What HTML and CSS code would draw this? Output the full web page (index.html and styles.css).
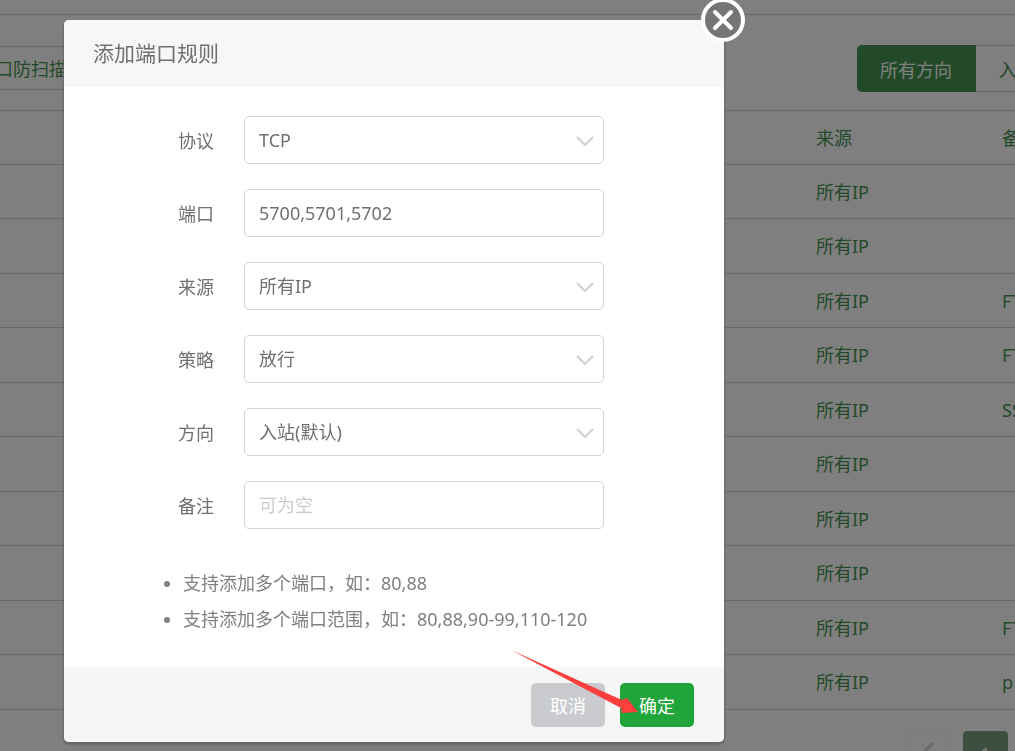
FILE: index.html
```html
<!DOCTYPE html>
<html lang="zh-CN">
<head>
    <meta charset="UTF-8">
    <meta name="viewport" content="width=device-width, initial-scale=1.0">
    <title>添加端口规则</title>
    <link rel="stylesheet" href="styles.css">
</head>
<body>
    <div class="page">
        <div class="topbar"></div>
        <div class="toolbar">
            <button type="button" class="btn-scan">口防扫描</button>
            <div class="btn-group">
                <button type="button" class="on">所有方向</button>
                <button type="button" class="in">入站</button>
            </div>
        </div>
        <table class="rules">
            <thead>
                <tr><th class="col-rest"></th><th class="col-source">来源</th><th class="col-ps">备注</th></tr>
            </thead>
            <tbody>
                <tr><td></td><td>所有IP</td><td></td></tr>
                <tr><td></td><td>所有IP</td><td></td></tr>
                <tr><td></td><td>所有IP</td><td>FTP</td></tr>
                <tr><td></td><td>所有IP</td><td>FTP</td></tr>
                <tr><td></td><td>所有IP</td><td>SSH</td></tr>
                <tr><td></td><td>所有IP</td><td></td></tr>
                <tr><td></td><td>所有IP</td><td></td></tr>
                <tr><td></td><td>所有IP</td><td></td></tr>
                <tr><td></td><td>所有IP</td><td>FTP</td></tr>
                <tr><td></td><td>所有IP</td><td>p</td></tr>
            </tbody>
        </table>
        <div class="pager">
            <button type="button" class="prev" aria-label="上一页"><svg width="12" height="20" viewBox="0 0 12 20"><path d="M10 2L2 10l8 8" fill="none" stroke="currentColor" stroke-width="3"/></svg></button>
            <button type="button" class="on">1</button>
        </div>
    </div>

    <div class="mask">
        <form class="layer">
            <div class="layer-title">添加端口规则</div>
            <button type="button" class="layer-close" aria-label="关闭">
                <svg width="46" height="46" viewBox="0 0 46 46">
                    <circle cx="23" cy="23" r="20" fill="#757575" stroke="#fff" stroke-width="4"/>
                    <path d="M15 15l16 16M31 15L15 31" fill="none" stroke="#fff" stroke-width="4" stroke-linecap="round"/>
                </svg>
            </button>
            <div class="layer-body">
                <div class="line">
                    <label for="protocol">协议</label>
                    <div class="field">
                        <select id="protocol"><option>TCP</option></select>
                        <svg class="arrow" width="18" height="10" viewBox="0 0 18 10"><path d="M1 1l8 8 8-8"/></svg>
                    </div>
                </div>
                <div class="line">
                    <label for="port">端口</label>
                    <div class="field"><input type="text" id="port" value="5700,5701,5702"></div>
                </div>
                <div class="line">
                    <label for="source">来源</label>
                    <div class="field">
                        <select id="source"><option>所有IP</option></select>
                        <svg class="arrow" width="18" height="10" viewBox="0 0 18 10"><path d="M1 1l8 8 8-8"/></svg>
                    </div>
                </div>
                <div class="line">
                    <label for="strategy">策略</label>
                    <div class="field">
                        <select id="strategy"><option>放行</option></select>
                        <svg class="arrow" width="18" height="10" viewBox="0 0 18 10"><path d="M1 1l8 8 8-8"/></svg>
                    </div>
                </div>
                <div class="line">
                    <label for="chain">方向</label>
                    <div class="field">
                        <select id="chain"><option>入站(默认)</option></select>
                        <svg class="arrow" width="18" height="10" viewBox="0 0 18 10"><path d="M1 1l8 8 8-8"/></svg>
                    </div>
                </div>
                <div class="line">
                    <label for="ps">备注</label>
                    <div class="field"><input type="text" id="ps" placeholder="可为空"></div>
                </div>
                <ul class="help">
                    <li>支持添加多个端口，如：80,88</li>
                    <li>支持添加多个端口范围，如：80,88,90-99,110-120</li>
                </ul>
            </div>
            <div class="layer-foot">
                <button type="button" class="btn btn-cancel">取消</button>
                <button type="submit" class="btn btn-ok">确定</button>
                <svg class="pointer" width="128" height="64" viewBox="0 0 128 64"><path d="M0 0l111 50 5-2 11 14-16 1-1-5z" fill="#fd3f3d"/></svg>
            </div>
        </form>
    </div>
</body>
</html>
```
FILE: styles.css
```css
* {box-sizing: border-box;}
body {margin: 0; height: 100vh; overflow: hidden; background: #fff; font-family: "Noto Sans", "Noto Sans CJK SC", sans-serif; font-size: 18px; color: #707070;}
button, input, select {font: inherit; margin: 0; padding: 0;}
button {cursor: pointer;}

/* page */
.page {height: 100vh; overflow: hidden; color: #469450;}
.topbar {height: 15px; border-bottom: 1px solid #d2d2d2;}
.toolbar {display: flex; justify-content: space-between; height: 95px; padding-top: 30px;}
.btn-scan {width: 120px; height: 44px; margin: 1px 0 0 -24px; padding-left: 19px; text-align: left; color: inherit; background: #fff; border: solid #d2d2d2; border-width: 1px 0;}
.btn-group {display: flex; width: 158px; height: 47px; flex: none;}
.btn-group button {flex: none; color: inherit; background: #fff; border: 1px solid #d2d2d2; border-left: 0;}
.btn-group .on {width: 119px; color: #fff; background: #469450; border-color: #469450; border-radius: 5px 0 0 5px;}
.btn-group .in {width: 82px;}
.rules {width: 100%; table-layout: fixed; border-collapse: collapse; text-align: left;}
.rules tr {height: 54px;}
.rules tbody tr:nth-child(even) {height: 55px;}
.rules th, .rules td {padding: 0; font-weight: 400; line-height: 24px; white-space: nowrap; overflow: hidden; border-top: 1px solid #d2d2d2; border-bottom: 1px solid #d2d2d2;}
.rules thead th {border-bottom: 1px dotted #d2d2d2;}
.col-source {width: 186px;}
.col-ps {width: 13px;}
.pager {display: flex; justify-content: flex-end; gap: 12px; padding: 21px 7px 0 0;}
.pager button {width: 45px; height: 45px; color: #fff; border: 1px solid #f4f4f4; border-radius: 4px; background: #fff;}
.pager .prev {color: #d2d2d2;}
.pager .on {background: #7b9b80; border-color: #7b9b80;}

/* layer */
.mask {position: fixed; top: 0; right: 0; bottom: 0; left: 0; padding: 20px 0 0 64px; background: rgba(0, 0, 0, .5);}
.layer {position: relative; width: 660px; background: #fff; border-radius: 5px; box-shadow: 0 2px 2px 1px #696969;}
.layer-title {padding: 0 29px; height: 67px; line-height: 67px; font-size: 21px; background: #f7f7f7; border-radius: 5px 5px 0 0;}
.layer-close {position: absolute; top: -23px; right: -22px; width: 46px; height: 46px; border: 0; background: none;}
.layer-close svg {display: block;}
.layer-body {padding: 29px 0 30px;}
.line {display: flex; align-items: center; margin-bottom: 25px;}
.line label {width: 150px; margin-right: 30px; text-align: right;}
.field {position: relative; width: 360px;}
.field input, .field select {display: block; width: 100%; height: 48px; padding: 0 14px; color: inherit; background: #fff; border: 1px solid #d2d3d8; border-radius: 5px; appearance: none; outline: 0;}
.field input::placeholder {color: #ccc; opacity: 1;}
.arrow {position: absolute; right: 10px; top: 20px; fill: none; stroke: #cfd0d4; stroke-width: 2; pointer-events: none;}
.help {margin: 36px 0 0; padding-left: 119px; line-height: 36px; color: #808080;}
.layer-foot {position: relative; display: flex; justify-content: flex-end; gap: 15px; padding: 16px 30px 15px; background: #f5f7f7; border-radius: 0 0 5px 5px;}
.btn {width: 74px; height: 44px; color: #fff; border: 0; border-radius: 5px;}
.btn-cancel {background: #cacbcf;}
.btn-ok {background: #20a53a;}
.pointer {position: absolute; top: -17px; right: 85px; pointer-events: none;}
```
